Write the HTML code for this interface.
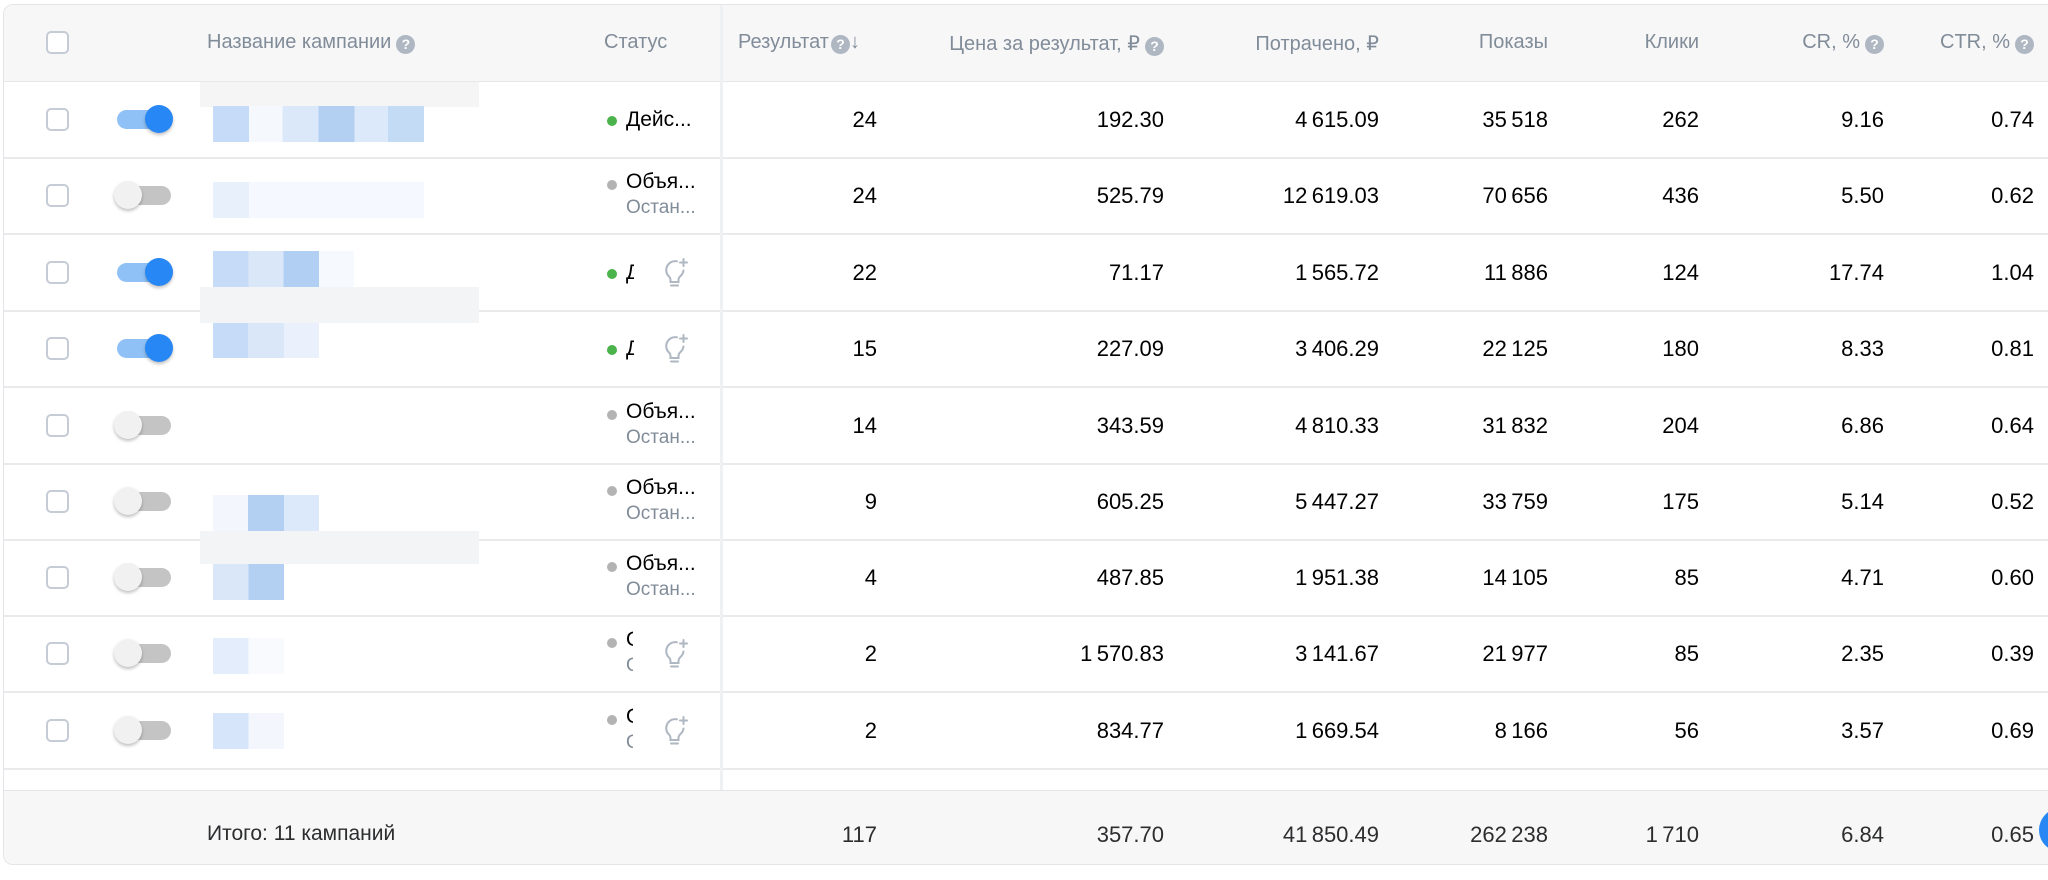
<!DOCTYPE html>
<html><head><meta charset="utf-8"><style>
*{box-sizing:border-box;margin:0;padding:0}
body{width:2048px;height:880px;background:#fff;font-family:"Liberation Sans",Arial,sans-serif;position:relative;overflow:hidden;color:#000}
.tbl{position:absolute;left:3px;top:4px;width:2060px;height:861px;border:1px solid #e3e5e8;border-radius:10px;overflow:hidden;background:#fff}
.hdr{position:absolute;left:0;top:0;right:0;height:77px;background:#f7f7f8;border-bottom:1px solid #e7e8ea}
.h{position:absolute;top:26px;font-size:20px;color:#818c99;white-space:nowrap}
.q{display:inline-block;width:19px;height:19px;border-radius:50%;background:#aeb7c2;color:#fff;font-size:14px;font-weight:bold;text-align:center;line-height:19px;vertical-align:-1px;margin-left:5px}
.row{position:absolute;left:0;right:0;height:77px;border-bottom:2px solid #e9eaec}
.n{position:absolute;top:25px;font-size:22px;color:#000;text-align:right;white-space:nowrap}
.cb{position:absolute;left:42px;width:23px;height:23px;border:2px solid #c5ccd5;border-radius:5px;background:#fff}
.tg{position:absolute;left:113px;top:28px;width:54px;height:19px;border-radius:10px}
.on .tg{background:#8fc1f6}
.off .tg{background:#c4c4c4}
.kn{position:absolute;top:-5px;width:28px;height:28px;border-radius:50%}
.on .kn{right:-2px;background:#2787f5;box-shadow:0 2px 3px rgba(0,0,0,.25)}
.off .kn{left:-3px;background:#f1f1f2;box-shadow:0 2px 3px rgba(0,0,0,.25)}
.st{position:absolute;left:603px;font-size:21px;white-space:nowrap;overflow:hidden}
.dot{position:absolute;left:603px;width:10px;height:10px;border-radius:50%}
.g{background:#4bb34b}.gr{background:#b3b3b3}
.sub{color:#818c99}
.blk{position:absolute;height:36px}
.ov{position:absolute;left:196px;width:279px;background:#f3f4f6}
.vd{position:absolute;left:716px;top:0;width:3px;height:785px;background:#eef0f2}
.c0{right:1185px}.c1{right:898px}.c2{right:683px}.c3{right:514px}.c4{right:363px}.c5{right:178px}.c6{right:28px}
.ft .n{top:31px;color:#2c2d2e}
</style></head><body>
<div class="tbl">
<div class="hdr">
 <div class="cb" style="top:26px"></div>
 <div class="h" style="left:203px">Название кампании<span class="q">?</span></div>
 <div class="h" style="left:600px">Статус</div>
 <div class="h" style="left:734px">Результат<span class="q" style="margin-left:2px">?</span>↓</div>
 <div class="h" style="right:898px">Цена за результат, ₽<span class="q">?</span></div>
 <div class="h" style="right:683px">Потрачено, ₽</div>
 <div class="h" style="right:514px">Показы</div>
 <div class="h" style="right:363px">Клики</div>
 <div class="h" style="right:178px">CR, %<span class="q">?</span></div>
 <div class="h" style="right:28px">CTR, %<span class="q">?</span></div>
</div>
<div class="ov" style="top:77px;height:25px;background:#f5f5f6"></div>

<div class="row on" style="top:77px"><div class="cb" style="top:26px"></div><div class="tg"><div class="kn"></div></div>
 <div class="blk" style="left:209px;top:24px;width:211px;background:linear-gradient(90deg,#c6dbf7 0 17%,#f5f9fe 17% 33%,#dbe8fa 33% 50%,#b3d0f3 50% 67%,#dce9fa 67% 83%,#c4dbf6 83%)"></div>
 <div class="dot g" style="top:34px"></div><div class="st" style="left:622px;top:26px">Дейс...</div>
 <div class="n c0">24</div><div class="n c1">192.30</div><div class="n c2">4&thinsp;615.09</div><div class="n c3">35&thinsp;518</div><div class="n c4">262</div><div class="n c5">9.16</div><div class="n c6">0.74</div></div>

<div class="row off" style="top:153px"><div class="cb" style="top:26px"></div><div class="tg"><div class="kn"></div></div>
 <div class="blk" style="left:209px;top:24px;width:211px;background:linear-gradient(90deg,#e8f0fc 0 17%,#f5f8fe 17%)"></div>
 <div class="dot gr" style="top:22px"></div><div class="st" style="left:622px;top:12px">Объя...</div><div class="st sub" style="left:622px;top:39px;font-size:19px">Остан...</div>
 <div class="n c0">24</div><div class="n c1">525.79</div><div class="n c2">12&thinsp;619.03</div><div class="n c3">70&thinsp;656</div><div class="n c4">436</div><div class="n c5">5.50</div><div class="n c6">0.62</div></div>

<div class="row on" style="top:230px"><div class="cb" style="top:26px"></div><div class="tg"><div class="kn"></div></div>
 <div class="blk" style="left:209px;top:16px;width:141px;background:linear-gradient(90deg,#c6dbf7 0 25%,#d9e7f9 25% 50%,#b1cff3 50% 75%,#f6f9fe 75%)"></div>
 <div class="ov" style="top:52px;height:36px;z-index:2"></div>
 <div class="dot g" style="top:34px"></div><div class="st" style="left:622px;top:26px;width:8px">Д</div>
 <svg style="position:absolute;left:656px;top:22px" width="30" height="32" viewBox="0 0 30 32" fill="none" stroke="#aeb7c2" stroke-width="2" stroke-linecap="round"><path d="M17 4.3A9 9 0 0 0 8 18.5c1.5 1.3 2.5 2.7 2.5 4.5v2h8v-2c0-1.8 1-3.2 2.5-4.5a9 9 0 0 0 2.5-5"/><path d="M11 28.5h7"/><path d="M23.5 2v7M20 5.5h7"/></svg>
 <div class="n c0">22</div><div class="n c1">71.17</div><div class="n c2">1&thinsp;565.72</div><div class="n c3">11&thinsp;886</div><div class="n c4">124</div><div class="n c5">17.74</div><div class="n c6">1.04</div></div>

<div class="row on" style="top:306px"><div class="cb" style="top:26px"></div><div class="tg"><div class="kn"></div></div>
 <div class="blk" style="left:209px;top:11px;width:106px;background:linear-gradient(90deg,#c6dbf7 0 33%,#d9e7f9 33% 67%,#eaf1fc 67%)"></div>
 <div class="dot g" style="top:34px"></div><div class="st" style="left:622px;top:26px;width:8px">Д</div>
 <svg style="position:absolute;left:656px;top:22px" width="30" height="32" viewBox="0 0 30 32" fill="none" stroke="#aeb7c2" stroke-width="2" stroke-linecap="round"><path d="M17 4.3A9 9 0 0 0 8 18.5c1.5 1.3 2.5 2.7 2.5 4.5v2h8v-2c0-1.8 1-3.2 2.5-4.5a9 9 0 0 0 2.5-5"/><path d="M11 28.5h7"/><path d="M23.5 2v7M20 5.5h7"/></svg>
 <div class="n c0">15</div><div class="n c1">227.09</div><div class="n c2">3&thinsp;406.29</div><div class="n c3">22&thinsp;125</div><div class="n c4">180</div><div class="n c5">8.33</div><div class="n c6">0.81</div></div>

<div class="row off" style="top:383px"><div class="cb" style="top:26px"></div><div class="tg"><div class="kn"></div></div>
 <div class="dot gr" style="top:22px"></div><div class="st" style="left:622px;top:12px">Объя...</div><div class="st sub" style="left:622px;top:39px;font-size:19px">Остан...</div>
 <div class="n c0">14</div><div class="n c1">343.59</div><div class="n c2">4&thinsp;810.33</div><div class="n c3">31&thinsp;832</div><div class="n c4">204</div><div class="n c5">6.86</div><div class="n c6">0.64</div></div>

<div class="row off" style="top:459px"><div class="cb" style="top:26px"></div><div class="tg"><div class="kn"></div></div>
 <div class="blk" style="left:209px;top:31px;width:106px;background:linear-gradient(90deg,#f3f7fd 0 33%,#b3d0f3 33% 67%,#dce9fa 67%)"></div>
 <div class="ov" style="top:67px;height:12px;z-index:2"></div>
 <div class="dot gr" style="top:22px"></div><div class="st" style="left:622px;top:12px">Объя...</div><div class="st sub" style="left:622px;top:39px;font-size:19px">Остан...</div>
 <div class="n c0">9</div><div class="n c1">605.25</div><div class="n c2">5&thinsp;447.27</div><div class="n c3">33&thinsp;759</div><div class="n c4">175</div><div class="n c5">5.14</div><div class="n c6">0.52</div></div>

<div class="row off" style="top:535px"><div class="cb" style="top:26px"></div><div class="tg"><div class="kn"></div></div>
 <div class="ov" style="top:0;height:24px;z-index:2"></div>
 <div class="blk" style="left:209px;top:24px;width:71px;background:linear-gradient(90deg,#d9e7f9 0 50%,#b3d0f3 50%)"></div>
 <div class="dot gr" style="top:22px"></div><div class="st" style="left:622px;top:12px">Объя...</div><div class="st sub" style="left:622px;top:39px;font-size:19px">Остан...</div>
 <div class="n c0">4</div><div class="n c1">487.85</div><div class="n c2">1&thinsp;951.38</div><div class="n c3">14&thinsp;105</div><div class="n c4">85</div><div class="n c5">4.71</div><div class="n c6">0.60</div></div>

<div class="row off" style="top:611px"><div class="cb" style="top:26px"></div><div class="tg"><div class="kn"></div></div>
 <div class="blk" style="left:209px;top:22px;width:71px;background:linear-gradient(90deg,#e3edfb 0 50%,#f8fafe 50%)"></div>
 <div class="dot gr" style="top:22px"></div><div class="st" style="left:622px;top:12px;width:7px">О</div><div class="st sub" style="left:622px;top:39px;width:7px;font-size:19px">О</div>
 <svg style="position:absolute;left:656px;top:22px" width="30" height="32" viewBox="0 0 30 32" fill="none" stroke="#aeb7c2" stroke-width="2" stroke-linecap="round"><path d="M17 4.3A9 9 0 0 0 8 18.5c1.5 1.3 2.5 2.7 2.5 4.5v2h8v-2c0-1.8 1-3.2 2.5-4.5a9 9 0 0 0 2.5-5"/><path d="M11 28.5h7"/><path d="M23.5 2v7M20 5.5h7"/></svg>
 <div class="n c0">2</div><div class="n c1">1&thinsp;570.83</div><div class="n c2">3&thinsp;141.67</div><div class="n c3">21&thinsp;977</div><div class="n c4">85</div><div class="n c5">2.35</div><div class="n c6">0.39</div></div>

<div class="row off" style="top:688px"><div class="cb" style="top:26px"></div><div class="tg"><div class="kn"></div></div>
 <div class="blk" style="left:209px;top:20px;width:71px;background:linear-gradient(90deg,#d6e5f9 0 50%,#f3f7fd 50%)"></div>
 <div class="dot gr" style="top:22px"></div><div class="st" style="left:622px;top:12px;width:7px">О</div><div class="st sub" style="left:622px;top:39px;width:7px;font-size:19px">О</div>
 <svg style="position:absolute;left:656px;top:22px" width="30" height="32" viewBox="0 0 30 32" fill="none" stroke="#aeb7c2" stroke-width="2" stroke-linecap="round"><path d="M17 4.3A9 9 0 0 0 8 18.5c1.5 1.3 2.5 2.7 2.5 4.5v2h8v-2c0-1.8 1-3.2 2.5-4.5a9 9 0 0 0 2.5-5"/><path d="M11 28.5h7"/><path d="M23.5 2v7M20 5.5h7"/></svg>
 <div class="n c0">2</div><div class="n c1">834.77</div><div class="n c2">1&thinsp;669.54</div><div class="n c3">8&thinsp;166</div><div class="n c4">56</div><div class="n c5">3.57</div><div class="n c6">0.69</div></div>

<div class="vd"></div>
<div class="dot gr" style="top:786px;width:6px;height:6px"></div>

<div class="ft" style="position:absolute;left:0;right:0;top:785px;height:76px;background:#f7f7f8;border-top:1px solid #e3e5e8">
 <div class="n" style="left:203px;font-size:21px">Итого: 11 кампаний</div>
 <div class="n c0">117</div><div class="n c1">357.70</div><div class="n c2">41&thinsp;850.49</div><div class="n c3">262&thinsp;238</div><div class="n c4">1&thinsp;710</div><div class="n c5">6.84</div><div class="n c6">0.65</div>
</div>
</div>
<div style="position:absolute;left:2039px;top:808px;width:44px;height:44px;border-radius:50%;background:#2787f5"></div>
</body></html>
